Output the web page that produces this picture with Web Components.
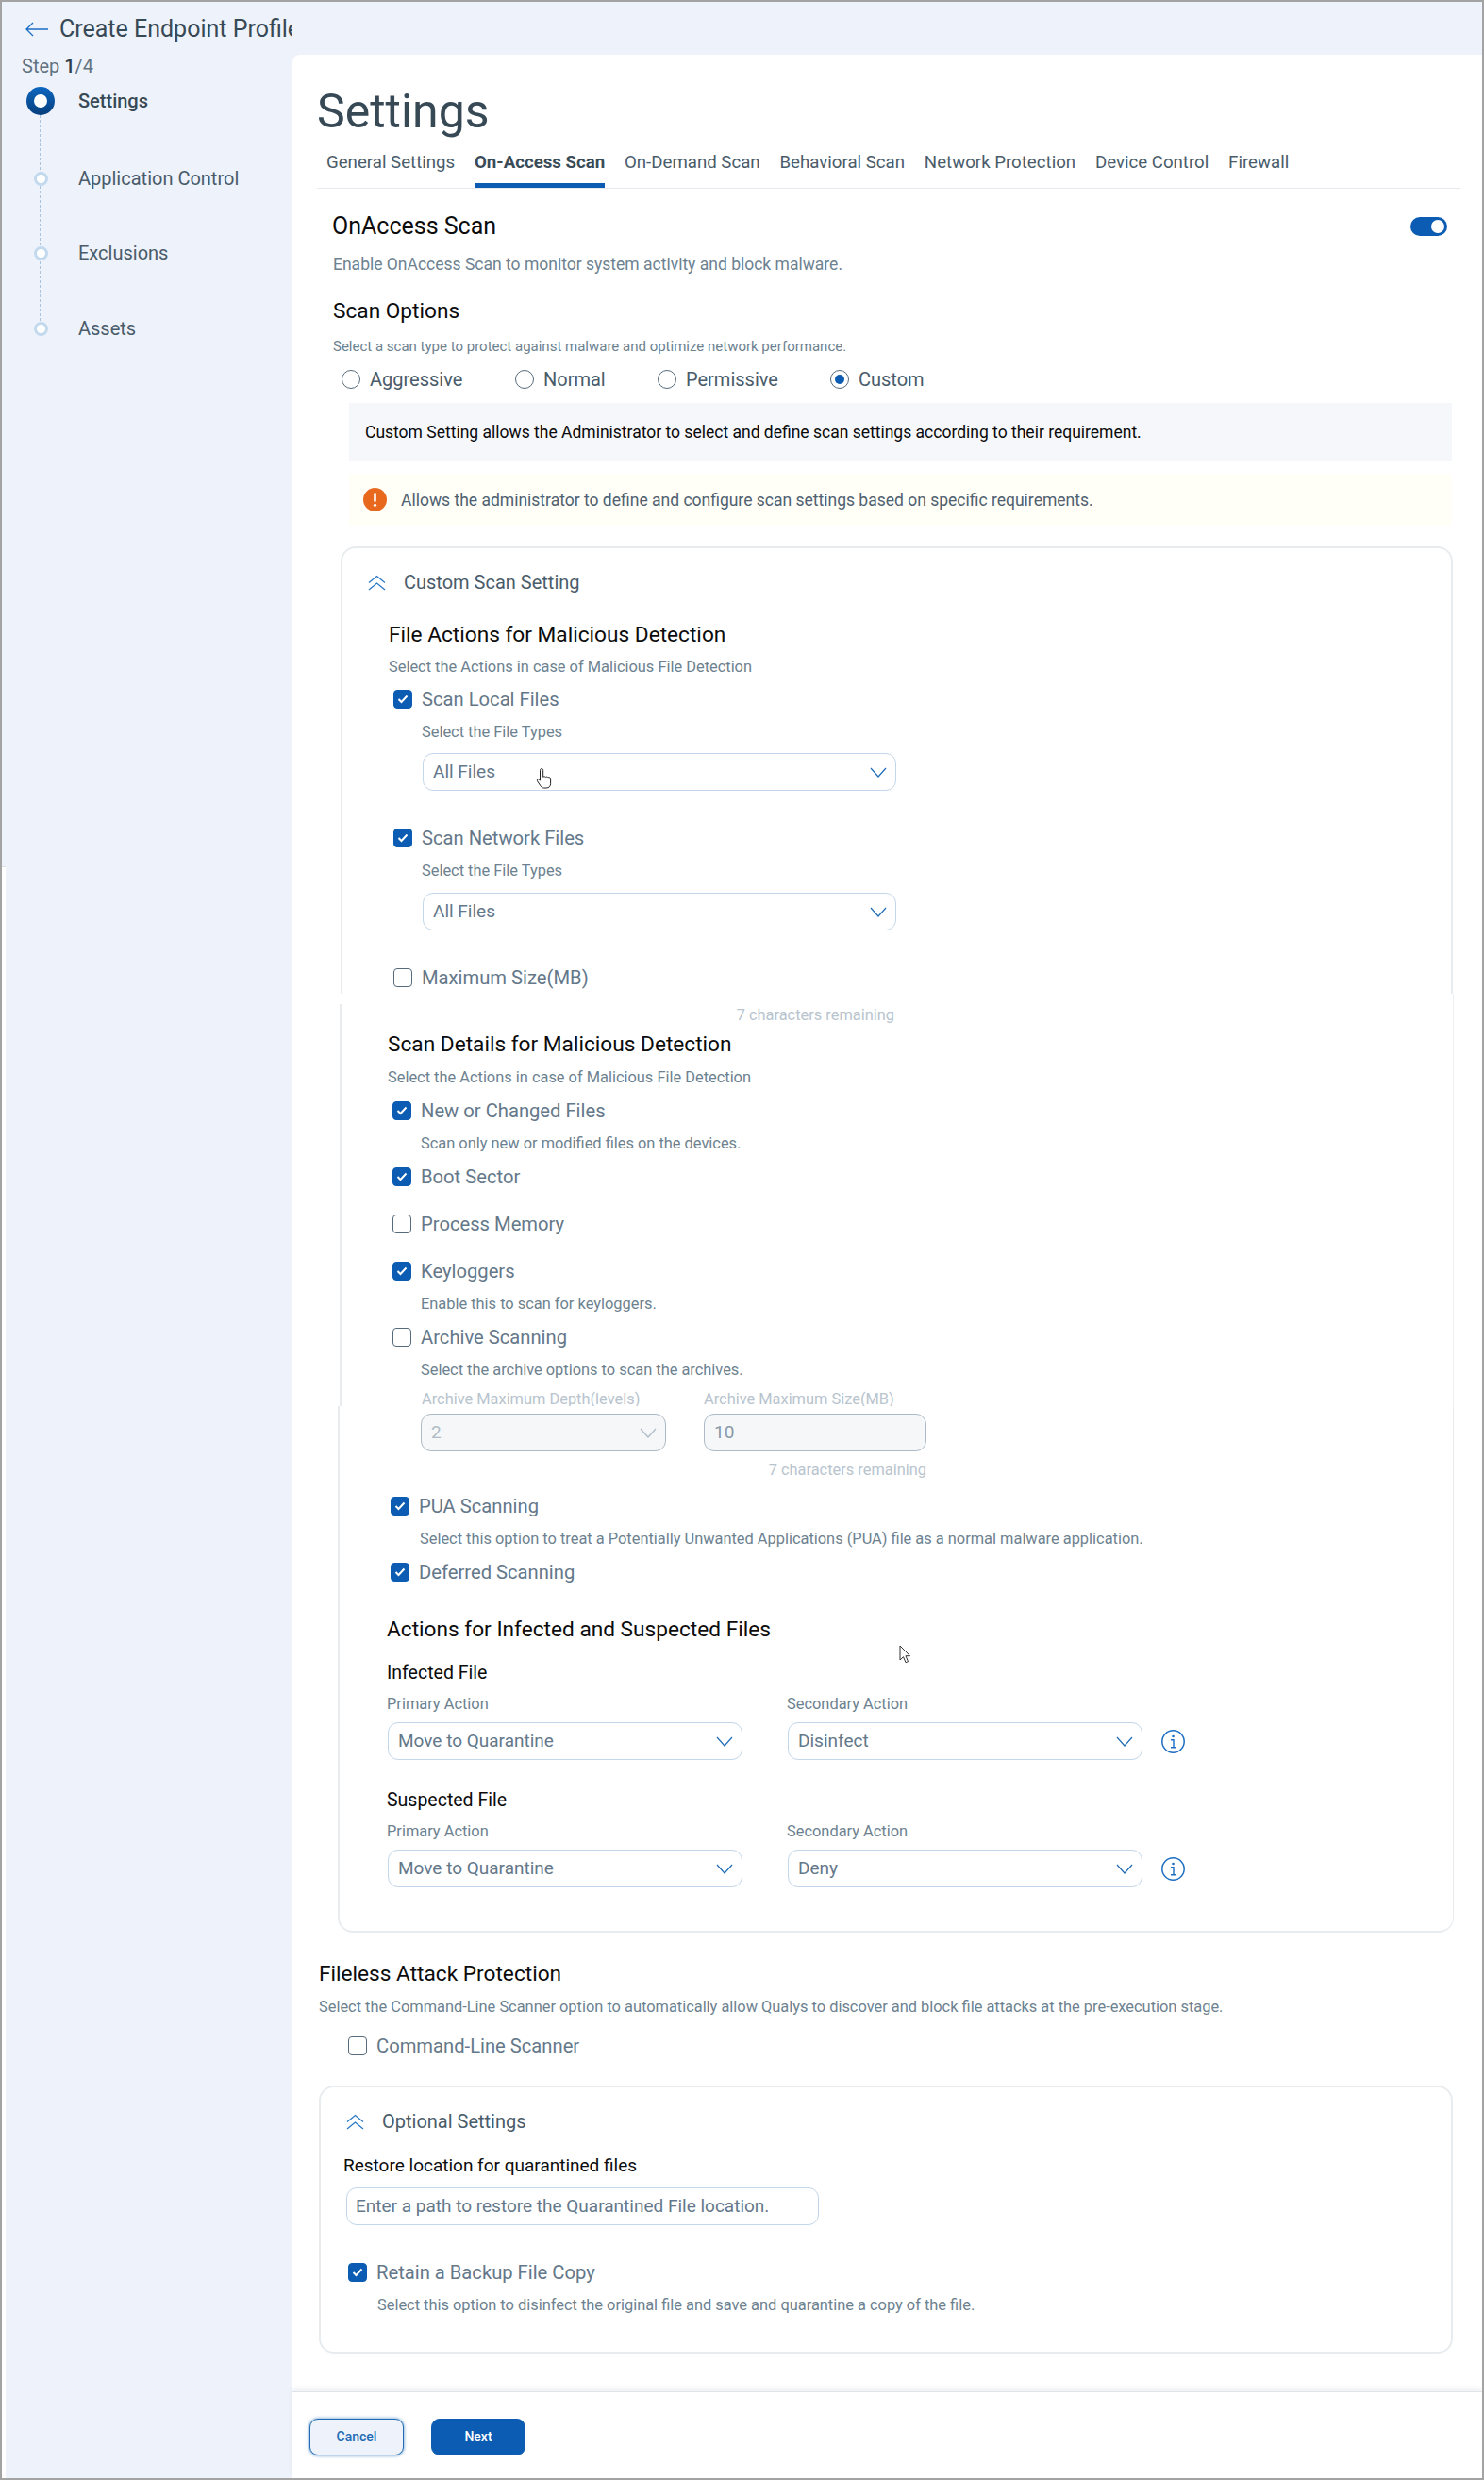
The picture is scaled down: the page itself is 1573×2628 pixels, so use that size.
<!DOCTYPE html>
<html><head><meta charset="utf-8"><style>
html,body{margin:0;padding:0;background:#fff}
body{font-family:Roboto,"Liberation Sans",sans-serif}
</style></head><body>
<ep-app></ep-app>
<script>
const CHEV='<svg width="18" height="11" viewBox="0 0 18 11" fill="none"><path d="M1 1l8 9 8-9" stroke="currentColor" stroke-width="1.2"/></svg>';
function def(name,css,html){
  customElements.define(name,class extends HTMLElement{
    constructor(){super();const s=this.attachShadow({mode:'open'});
      s.innerHTML='<style>'+css+'</style>'+(typeof html==='function'?html(this):html);}
  });
}
def('ep-check',`
:host{display:flex;align-items:center;height:20px;font:400 20.2px/20px Roboto,sans-serif;color:#64788a;white-space:nowrap}
.b{width:20px;height:20px;box-sizing:border-box;border:1.2px solid #566b7b;border-radius:4px;margin-right:10px;flex:none;display:flex;align-items:center;justify-content:center}
:host([on]) .b{background:#0b5cb2;border-color:#0b5cb2}
svg{display:none}:host([on]) svg{display:block}
`,`<span class="b"><svg width="12" height="10" viewBox="0 0 12 10" fill="none"><path d="M1.5 5l3 3 6-6.5" stroke="#fff" stroke-width="2"/></svg></span><slot></slot>`);
def('ep-radio',`
:host{display:flex;align-items:center;height:20px;font:400 20px/20px Roboto,sans-serif;color:#4a5c6a;flex:none}
.r{width:20px;height:20px;box-sizing:border-box;border:1.2px solid #566b7b;border-radius:50%;margin-right:10px;display:flex;align-items:center;justify-content:center}
:host([on]) .r::after{content:"";width:10px;height:10px;border-radius:50%;background:#0b5cb2}
`,`<span class="r"></span><slot></slot>`);
def('ep-select',`
:host{display:flex;align-items:center;justify-content:space-between;box-sizing:border-box;height:40px;border:1.2px solid #c3d7ea;border-radius:11px;padding:0 9px 0 10px;font:400 19px/20px Roboto,sans-serif;color:#64788a;background:#fff;position:relative;flex:none;white-space:nowrap}
:host([off]){background:#f5f7f9;border-color:#aebbc6;color:#b0bcc6}
span.c{color:#1f6cb5;display:flex}
:host([off]) span.c{color:#aebbc6}
:host([plain]) span.c{display:none}
:host([num]){color:#8899a6}
`,`<slot></slot><span class="c">${CHEV}</span>`);
def('ep-help',`:host{display:block;font:400 16.4px/18px Roboto,sans-serif;color:#6d8290;white-space:nowrap}`,`<slot></slot>`);
def('ep-count',`:host{display:block;font:400 16.4px/18px Roboto,sans-serif;color:#b8c4ce;text-align:right;white-space:nowrap}`,`<slot></slot>`);
def('ep-h',`:host{display:block;font:400 22.67px/26px Roboto,sans-serif;color:#0c0c0c;white-space:nowrap}`,`<slot></slot>`);
def('ep-sub',`:host{display:block;font:400 19.5px/20px Roboto,sans-serif;color:#0c0c0c;white-space:nowrap}`,`<slot></slot>`);
def('ep-stepper',`
:host{display:block;font:400 20px/22px Roboto,sans-serif;color:#4a5c6a}
.step{font-size:20px;color:#5f7382;line-height:20px;padding:2px 0 0 21px}
.step b{font-weight:500;color:#2e3f4c}
.list{margin:12px 0 0 26px;position:relative;display:flex;flex-direction:column}
.line{position:absolute;left:14px;top:30px;height:218px;border-left:1px dashed #a9c3dc}
.it{display:flex;align-items:center;position:relative;height:30px;white-space:nowrap}
.it:nth-child(3){margin-top:52px}
.it:nth-child(4){margin-top:49px}
.it:nth-child(5){margin-top:50px}
.it i{width:15px;height:15px;box-sizing:border-box;border:3px solid #c3d9ee;border-radius:50%;background:#fff;margin:0 7px 0 8px;flex:none}
.it.a i{width:30px;height:30px;margin:0;border:0;background:linear-gradient(#0d66c0,#063f7d);display:flex;align-items:center;justify-content:center}
.it.a i::after{content:"";width:14px;height:14px;border-radius:50%;background:#fff}
.it span{margin-left:25px}
.it.a span{font-weight:500;color:#374955}
`,`<div class="step">Step <b>1</b>/4</div><div class="list"><div class="line"></div>
<div class="it a"><i></i><span>Settings</span></div>
<div class="it"><i></i><span>Application Control</span></div>
<div class="it"><i></i><span>Exclusions</span></div>
<div class="it"><i></i><span>Assets</span></div></div>`);
def('ep-header',`
:host{display:block;height:56px;width:308px;overflow:hidden;white-space:nowrap;font:400 25px/30px Roboto,sans-serif;color:#374955}
.w{display:flex;align-items:center;height:56px;padding:0 0 0 24px;margin-top:1px}
svg{margin-right:11px;flex:none}
`,`<div class="w"><svg width="26" height="16" viewBox="0 0 26 16" fill="none"><path d="M25 8H2M9 1L2 8l7 7" stroke="#1b6ec2" stroke-width="1.3"/></svg><slot></slot></div>`);
def('ep-tabs',`
:host{display:flex;gap:20.8px;padding:0 0 0 10px;height:52px;box-sizing:border-box;border-bottom:1px solid #e6e9ee;font:400 18.67px/20px Roboto,sans-serif;color:#4a5c6a;white-space:nowrap}
div{height:51px;box-sizing:border-box;padding-top:14px}
.a{font-weight:700;color:#3a4b58;border-bottom:5px solid #0b5cb2}
`,`<div>General Settings</div><div class="a">On-Access Scan</div><div>On-Demand Scan</div><div>Behavioral Scan</div><div>Network Protection</div><div>Device Control</div><div>Firewall</div>`);
def('ep-note',`
:host{display:flex;align-items:center;box-sizing:border-box;font:400 17.5px/20px Roboto,sans-serif;white-space:nowrap}
:host([kind=gray]){height:62px;background:#f5f7fa;color:#0a0a0a;padding-left:17px}
:host([kind=warn]){height:55px;background:#fffef7;color:#4f6170;padding-left:15px}
svg{margin-right:15px;flex:none}
`,el=>(el.getAttribute('kind')==='warn'?`<svg width="25" height="25" viewBox="0 0 25 25"><circle cx="12.5" cy="12.5" r="12.5" fill="#e8691d"/><path d="M12.5 5.500v9" stroke="#fff" stroke-width="2.6"/><circle cx="12.5" cy="18.3" r="1.6" fill="#fff"/></svg>`:'')+'<slot></slot>');
def('ep-collapse',`
:host{display:flex;align-items:center;font:400 20px/22px Roboto,sans-serif;color:#4a5c6a;height:22px;white-space:nowrap}
svg{margin-right:19px;flex:none}
`,`<svg width="19" height="17" viewBox="0 0 19 17" fill="none"><path d="M1 8.5L9.5 1.5 18 8.5M1 16L9.5 9 18 16" stroke="#2a79c6" stroke-width="1.3"/></svg><slot></slot>`);
def('ep-info',`:host{display:block;width:25px;height:25px;flex:none;margin-left:20px}`,`<svg width="25" height="25" viewBox="0 0 25 25" fill="none"><circle cx="12.5" cy="12.5" r="11.7" stroke="#1b6ec2" stroke-width="1.5"/><circle cx="12.5" cy="7" r="1.3" fill="#1b6ec2"/><path d="M10 10.8h3v8M10 18.8h5.5" stroke="#1b6ec2" stroke-width="1.4"/></svg>`);
def('ep-action',`
:host{display:block}
.l{display:flex;margin-top:14px}
.l ep-help{width:424px}
.s{display:flex;align-items:center;margin:10px 0 0 1px}
.s ep-select{width:376px}
.s ep-select+ep-select{margin-left:48px}
`,el=>`<ep-sub>${el.getAttribute('name')}</ep-sub>
<div class="l"><ep-help>Primary Action</ep-help><ep-help>Secondary Action</ep-help></div>
<div class="s"><ep-select>Move to Quarantine</ep-select><ep-select>${el.getAttribute('second')}</ep-select><ep-info></ep-info></div>`);
def('ep-custom-scan',`
:host{display:block;margin:22px 0 0 25px;position:relative}
.seg{background:#fff}
.s1{border:2px solid #e9ecef;border-bottom:0;border-radius:16px 16px 0 0;margin-right:8px;height:474px;box-sizing:border-box;overflow:hidden}
.s2{margin:0 7px 0 -1px;height:437px;box-sizing:border-box;overflow:hidden;padding-left:2px;border-right:1px solid #ecf0f3;background:linear-gradient(#e9ecef,#e9ecef) 0 11px/2px 100% no-repeat}
.s3{margin:0 7px 0 -3px;height:558px;box-sizing:border-box;border:solid #e9ecef;border-width:0 1px 2px 2px;border-radius:0 0 16px 16px;padding-top:8px}
.fields{display:flex;gap:40px}
`,`
<div class="seg s1">
 <ep-collapse style="margin:25px 0 0 27px">Custom Scan Setting</ep-collapse>
 <ep-h style="margin:32px 0 0 49px">File Actions for Malicious Detection</ep-h>
 <ep-help style="margin:12px 0 0 49px">Select the Actions in case of Malicious File Detection</ep-help>
 <ep-check on style="margin:15px 0 0 54px">Scan Local Files</ep-check>
 <ep-help style="margin:16px 0 0 84px">Select the File Types</ep-help>
 <ep-select style="margin:13px 0 0 85px;width:502px">All Files</ep-select>
 <ep-check on style="margin:40px 0 0 54px">Scan Network Files</ep-check>
 <ep-help style="margin:16px 0 0 84px">Select the File Types</ep-help>
 <ep-select style="margin:14px 0 0 85px;width:502px">All Files</ep-select>
 <ep-check style="margin:40px 0 0 54px">Maximum Size(MB)</ep-check>
</div>
<div class="seg s2">
 <ep-count style="width:586px;padding-top:14px">7 characters remaining</ep-count>
 <ep-h style="margin:9px 0 0 49px">Scan Details for Malicious Detection</ep-h>
 <ep-help style="margin:13px 0 0 49px">Select the Actions in case of Malicious File Detection</ep-help>
 <ep-check on style="margin:16px 0 0 54px">New or Changed Files</ep-check>
 <ep-help style="margin:16px 0 0 84px">Scan only new or modified files on the devices.</ep-help>
 <ep-check on style="margin:16px 0 0 54px">Boot Sector</ep-check>
 <ep-check style="margin:30px 0 0 54px">Process Memory</ep-check>
 <ep-check on style="margin:30px 0 0 54px">Keyloggers</ep-check>
 <ep-help style="margin:16px 0 0 84px">Enable this to scan for keyloggers.</ep-help>
 <ep-check style="margin:16px 0 0 54px">Archive Scanning</ep-check>
 <ep-help style="margin:16px 0 0 84px">Select the archive options to scan the archives.</ep-help>
 <div style="display:flex;margin:13px 0 0 85px;height:16px;overflow:hidden">
  <ep-count style="width:299px;text-align:left">Archive Maximum Depth(levels)</ep-count>
  <ep-count>Archive Maximum Size(MB)</ep-count>
 </div>
</div>
<div class="seg s3">
 <div class="fields" style="margin-left:86px">
  <ep-select off style="width:260px">2</ep-select>
  <ep-select off plain num style="width:236px">10</ep-select>
 </div>
 <ep-count style="width:622px;margin-top:11px">7 characters remaining</ep-count>
 <ep-check on style="margin:19px 0 0 54px">PUA Scanning</ep-check>
 <ep-help style="margin:16px 0 0 85px">Select this option to treat a Potentially Unwanted Applications (PUA) file as a normal malware application.</ep-help>
 <ep-check on style="margin:16px 0 0 54px">Deferred Scanning</ep-check>
 <ep-h style="margin:38px 0 0 50px">Actions for Infected and Suspected Files</ep-h>
 <ep-action name="Infected File" second="Disinfect" style="margin:23px 0 0 50px"></ep-action>
 <ep-action name="Suspected File" second="Deny" style="margin:33px 0 0 50px"></ep-action>
</div>
<svg style="position:absolute;left:207px;top:234px" width="19" height="23" viewBox="0 0 19 23"><path d="M6 1.5c1.2 0 1.7.8 1.7 1.800v7c.4-.6 2.200-.7 2.600.2.500-.6 2.200-.6 2.600.4.600-.5 2.500-.3 2.700 1.200v5.400c0 2.500-1.500 4.500-4.500 4.500H8.500c-1.700 0-2.600-.8-3.600-2.200L1.500 14.700c-.8-1.200.8-2.500 2-1.500l1 1V3.300C4.500 2.300 5 1.500 6 1.500z" fill="#fff" stroke="#222" stroke-width="1"/></svg>
<svg style="position:absolute;left:592px;top:1164px" width="13" height="20" viewBox="0 0 13 20"><path d="M1 1v15l3.500-3.300 2.500 6 2.500-1-2.500-6h4.500z" fill="#fff" stroke="#333" stroke-width="1"/></svg>
`);
def('ep-optional',`
:host{display:block;margin:32px 8px 0 2px;height:284px;box-sizing:border-box;border:2px solid #e9ecef;border-radius:16px;background:#fff}
`,`
<ep-collapse style="margin:25px 0 0 27px">Optional Settings</ep-collapse>
<ep-sub style="margin:26px 0 0 24px;font-size:19px">Restore location for quarantined files</ep-sub>
<ep-select plain style="margin:13px 0 0 27px;width:501px;padding-left:9px">Enter a path to restore the Quarantined File location.</ep-select>
<ep-check on style="margin:40px 0 0 29px">Retain a Backup File Copy</ep-check>
<ep-help style="margin:16px 0 0 60px">Select this option to disinfect the original file and save and quarantine a copy of the file.</ep-help>
`);
def('ep-app',`
:host{display:block;width:1573px;height:2628px;box-sizing:border-box;border:2px solid #a3a3a3;position:relative;overflow:hidden;background:#eef2fa;font-family:Roboto,sans-serif}
.strip{position:absolute;left:0;top:916px;width:4px;bottom:0;background:#fff;border-top:1px solid #dfe1e5}
.cols{display:flex;height:100%}
.side{width:308px;flex:none}
.main{flex:1;min-width:0;margin-top:56px;background:#fff;border-top-left-radius:8px;display:flex;flex-direction:column}
.body{flex:1;padding:0 23px 0 26px}
.title{font:400 50px/60px Roboto,sans-serif;color:#374955;padding-top:30px;height:60px}
.row{display:flex;justify-content:space-between;align-items:center;margin:27px 0 0 16px}
.row ep-h{font-size:25px}
.sw{width:39px;height:20px;border-radius:10px;background:#0b5cb2;position:relative;margin-right:14px}
.sw::after{content:"";position:absolute;right:3px;top:3px;width:14px;height:14px;border-radius:50%;background:#fff}
.desc{font:400 17.5px/20px Roboto,sans-serif;color:#6d8290;margin:17px 0 0 17px}
.radios{display:flex;margin:16px 0 0 26px}
.foot{height:92px;flex:none;box-sizing:border-box;border-top:1px solid #dfe4ea;box-shadow:0 -3px 5px rgba(90,110,130,.1);padding:28px 0 0 18px;display:flex;gap:29px;background:#fff}
.btn{width:100px;height:39px;box-sizing:border-box;border-radius:9px;font:500 14px/37px Roboto,sans-serif;text-align:center}
.cancel{background:#eef2fa;border:1.5px solid #1f6cb5;color:#1f6cb5;box-shadow:0 0 3px 1px rgba(31,108,181,.45)}
.next{background:#0b5cb2;color:#fff;border:1px solid #0b5cb2}
`,`
<div class="strip"></div>
<div class="cols">
<div class="side"><ep-header>Create Endpoint Profile</ep-header><ep-stepper></ep-stepper></div>
<div class="main"><div class="body">
<div class="title">Settings</div>
<ep-tabs></ep-tabs>
<div class="row"><ep-h>OnAccess Scan</ep-h><div class="sw"></div></div>
<div class="desc">Enable OnAccess Scan to monitor system activity and block malware.</div>
<ep-h style="margin:27px 0 0 17px">Scan Options</ep-h>
<ep-help style="margin:15px 0 0 17px;font-size:15px">Select a scan type to protect against malware and optimize network performance.</ep-help>
<div class="radios">
<ep-radio style="width:184px">Aggressive</ep-radio><ep-radio style="width:151px">Normal</ep-radio><ep-radio style="width:183px">Permissive</ep-radio><ep-radio on>Custom</ep-radio>
</div>
<ep-note kind="gray" style="margin:15px 9px 0 34px">Custom Setting allows the Administrator to select and define scan settings according to their requirement.</ep-note>
<ep-note kind="warn" style="margin:13px 9px 0 34px">Allows the administrator to define and configure scan settings based on specific requirements.</ep-note>
<ep-custom-scan></ep-custom-scan>
<ep-h style="margin:31px 0 0 2px">Fileless Attack Protection</ep-h>
<ep-help style="margin:13px 0 0 2px">Select the Command-Line Scanner option to automatically allow Qualys to discover and block file attacks at the pre-execution stage.</ep-help>
<ep-check style="margin:22px 0 0 33px">Command-Line Scanner</ep-check>
<ep-optional></ep-optional>
</div>
<div class="foot"><div class="btn cancel">Cancel</div><div class="btn next">Next</div></div>
</div></div>`);
</script>
</body></html>
